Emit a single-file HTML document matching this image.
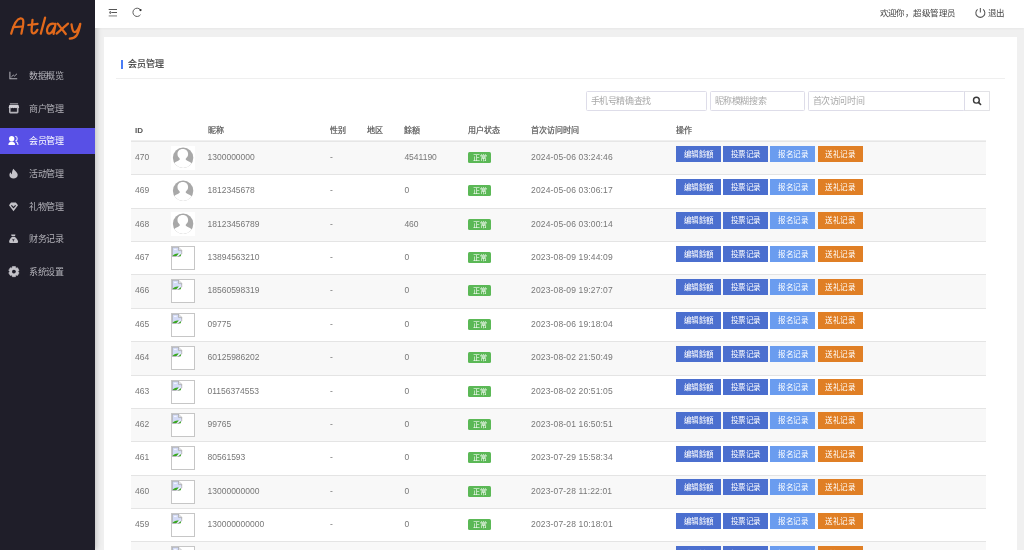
<!DOCTYPE html>
<html lang="zh-CN"><head><meta charset="utf-8">
<style>
*{margin:0;padding:0;box-sizing:border-box}
html,body{width:1024px;height:550px;overflow:hidden;background:#f0f0f0;font-family:"Liberation Sans",sans-serif;color:#555}
.a{position:absolute}
#side{position:absolute;left:0;top:0;width:95px;height:550px;background:#1f1e29;z-index:3;box-shadow:1px 0 6px rgba(0,0,0,.22)}
#logo{position:absolute;left:0;top:0}
.mi{position:absolute;left:0;width:95px;height:26px;color:#b3b2b9}
.mi .t{position:absolute;left:29px;top:0;line-height:26px;font-size:9px;letter-spacing:-.5px;white-space:nowrap}
.mi svg{position:absolute;left:5px;top:3px}
.mi.act{background:#5850e6;color:#fff}
#head{position:absolute;left:95px;top:0;width:929px;height:28px;background:#fff;z-index:4;box-shadow:0 1px 2px rgba(0,0,0,.04)}
#card{position:absolute;left:104px;top:37px;width:913px;height:520px;background:#fff}
.ttl{position:absolute;left:128px;top:58.3px;font-size:9px;color:#333;line-height:12px;white-space:nowrap;-webkit-text-stroke:.15px #333}
.bar{position:absolute;left:121px;top:60px;width:2px;height:8.6px;background:#4a7cf6}
.sep{position:absolute;left:116px;top:78px;width:889px;height:1px;background:#efefef}
.inp{position:absolute;top:91px;height:20px;border:1px solid #dedde9;border-radius:1.5px;background:#fff;font-size:9px;letter-spacing:-.45px;color:#a9a9a9;line-height:18.6px;padding-left:3.8px;white-space:nowrap}
.sbtn{position:absolute;top:91px;left:964px;width:25.5px;height:19.8px;border:1px solid #e2e2e6;border-left-color:#dcdbe8;border-radius:0 1px 1px 0;background:#fff}
.thead{position:absolute;left:131px;top:119px;width:855px;height:23px;border-bottom:1px solid #e6e6e6;box-shadow:inset 0 -1px 0 #efefef}
.th{position:absolute;top:6.2px;line-height:12px;font-size:8px;letter-spacing:0;font-weight:normal;-webkit-text-stroke:.2px #555;color:#555;white-space:nowrap}
.row{position:absolute;left:131px;width:855px;height:33.36px;border-bottom:1px solid #e4e4e4;font-size:8.5px;color:#777}
.row.odd{background:#f8f8f8}
.row.even{background:#fff}
.tx{position:absolute;top:0;line-height:30.3px;white-space:nowrap}
.dt{letter-spacing:.15px}
.av{position:absolute;left:40.3px;top:3.5px;width:24px;height:24px;background:#fff}
.av svg{display:block}
.br{position:absolute;left:40px;top:4px;width:24px;height:24px;border:1px solid #c6c6c6;background:#fff}
.tag{position:absolute;left:336.8px;top:10px;width:23.5px;height:11px;background:#5bb856;border-radius:1.5px;color:#fff;font-size:7px;line-height:11px;text-align:center;letter-spacing:-.2px}
.btn{position:absolute;top:3.6px;height:16.3px;line-height:17.8px;width:45px;text-align:center;color:#fff;font-size:7.5px;letter-spacing:.5px;text-indent:.5px}
.b1{background:#4b6fcf}
.b2{background:#4b6fcf}
.b3{background:#6a9cef}
.b4{background:#e07f25}
</style></head><body><div id="root" style="position:absolute;left:0;top:0;width:1024px;height:550px;will-change:transform">
<div id="side">
  <svg id="logo" width="95" height="50" viewBox="0 0 95 50"><g fill="none" stroke="#e2691b" stroke-width="2.25" stroke-linecap="round" stroke-linejoin="round">
    <path d="M11.2 33.6C13 27 16 18.8 20.5 18.3C23.6 18 23.6 21 23.1 25L21.4 33.6"/>
    <path d="M13.6 27.2L22.8 26.5"/>
    <path d="M32.5 19.8L31.6 29.5C31.4 32.5 32.5 33.4 33.8 33.3C35.5 33.1 36.6 31.5 37.4 29.8"/>
    <path d="M28.3 25L37.6 23.8"/>
    <path d="M45.1 17.6L40.8 33.6"/>
    <path d="M55.2 24C52.5 23.3 49.2 24 47.8 27C46.6 29.6 46.6 33.2 48.8 33.6C51 34 53.3 30.3 54.6 27.3M55.6 23.8L53.6 33.8"/>
    <path d="M57.7 23.6L65.8 34M68 23.6L56.6 33.6"/>
    <path d="M71.5 24.3C72 27 72.3 31.5 74.3 32C76 32.3 78.5 28.8 80.3 23.8C79.5 28.5 78.3 33 76.5 35.5C75 37.5 72.5 38.5 69.8 38.7"/>
  </g></svg>
  <div class="mi" style="top:62.80px"><svg width="20" height="20" viewBox="0 0 20 20"><path d="M4.9 5.8V12.7H12.2" stroke="#b3b2b9" stroke-width="1.05" fill="none"/><path d="M6.3 11L8.3 9.1 9.4 10.1 12 7.8" stroke="#b3b2b9" stroke-width=".9" fill="none"/></svg><span class="t">数据概览</span></div>
<div class="mi" style="top:95.50px"><svg width="20" height="20" viewBox="0 0 20 20"><path d="M4.9 4.3H13.1V5.4H4.9z" fill="#a8a7ae"/><path d="M4.3 6H13.5L14.2 8.8Q13.2 9.6 12.1 8.8Q11 9.6 9.9 8.8Q8.8 9.6 7.7 8.8Q6.6 9.6 5.5 8.8Q4.4 9.5 3.6 8.8z" fill="#d2d1d7"/><path d="M4.8 9.1V13.1Q4.8 13.6 5.3 13.6H12.2Q12.7 13.6 12.7 13.1V9.1" stroke="#b3b2b9" stroke-width="1.6" fill="none"/></svg><span class="t">商户管理</span></div>
<div class="mi act" style="top:128.20px"><svg width="20" height="20" viewBox="0 0 20 20"><circle cx="6.7" cy="7.7" r="2.65" fill="#fff"/><path d="M3.3 14C3.3 11.7 4.8 10.5 6.7 10.5S10.1 11.7 10.1 14z" fill="#fff"/><path d="M10.3 5.3A2.4 2.4 0 0 1 10.3 10M11 10.8C12.3 11.3 13 12.4 13 13.9" stroke="#eeeefc" stroke-width="1.1" fill="none"/></svg><span class="t">会员管理</span></div>
<div class="mi" style="top:160.90px"><svg width="20" height="20" viewBox="0 0 20 20"><path d="M8.5 4.8C9.3 6.3 10.6 7 11.3 7.9C12.2 8.9 12.7 9.9 12.7 11.1C12.7 13.1 10.8 14.6 8.5 14.6C6.2 14.6 4.4 13.1 4.4 11.1C4.4 9.6 5.1 8.7 5.7 8.2C5.8 9.2 6.3 9.9 6.9 10.2C6.8 8.2 7.4 6 8.5 4.8Z" fill="#c4c3c9"/></svg><span class="t">活动管理</span></div>
<div class="mi" style="top:193.60px"><svg width="20" height="20" viewBox="0 0 20 20"><path d="M6.1 5.4H10.9L13 8.3L8.5 14.2L4 8.3Z" fill="#c4c3c9"/><path d="M6.4 8.3L8.5 10.7L10.6 8.3" stroke="#1f1e29" stroke-width="1.1" fill="none"/><path d="M5.5 7.2H11.5" stroke="#c4c3c9" stroke-width=".6"/></svg><span class="t">礼物管理</span></div>
<div class="mi" style="top:226.30px"><svg width="20" height="20" viewBox="0 0 20 20"><path d="M6.4 5.4H10.2Q10.6 5.4 10.4 5.9L10 6.9H6.6L6.2 5.9Q6 5.4 6.4 5.4z" fill="#c4c3c9"/><path d="M7.2 7.7H9.6C10.6 8.6 13.1 10.6 13.1 12.8Q13.1 14.1 11.8 14.1H5.4Q4.1 14.1 4.1 12.8C4.1 10.6 6.2 8.6 7.2 7.7z" fill="#c4c3c9"/><path d="M7.5 9.9L8.4 11.1 9.3 9.9M8.4 11.1V12.4" stroke="#1f1e29" stroke-width=".85" fill="none"/></svg><span class="t">财务记录</span></div>
<div class="mi" style="top:259.00px"><svg width="20" height="20" viewBox="0 0 20 20"><path d="M6.96 6.22 L7.33 4.54 L10.47 4.54 L10.84 6.22 L10.86 6.23 L12.50 5.71 L14.07 8.42 L12.80 9.59 L12.80 9.61 L14.07 10.78 L12.50 13.49 L10.86 12.97 L10.84 12.98 L10.47 14.66 L7.33 14.66 L6.96 12.98 L6.94 12.97 L5.30 13.49 L3.73 10.78 L5.00 9.61 L5.00 9.59 L3.73 8.42 L5.30 5.71 L6.94 6.23Z" fill="#c4c3c9" stroke="#c4c3c9" stroke-width=".6" stroke-linejoin="round"/><circle cx="8.9" cy="9.6" r="1.9" fill="#1f1e29"/></svg><span class="t">系统设置</span></div>
</div>
<div id="head">
  <svg class="a" style="left:0;top:0" width="80" height="28" viewBox="95 0 80 28"><g stroke="#555" fill="none">
    <path d="M108.7 9.5H117M111.3 12.5H117" stroke-width="1.05"/><path d="M108.7 15.9H117" stroke-width="1.3" stroke="#9a9a9a"/>
    <path d="M110.4 11.1Q108.6 12.5 110.4 13.9Z" fill="#555" stroke-width=".6"/>
    <path d="M140.3 9.7A4.15 4.15 0 1 0 140.5 14.7" stroke-width=".95" stroke="#555"/>
  </g><circle cx="140.5" cy="10.1" r="1.15" fill="#333"/></svg>
  <div class="a" style="left:784.5px;top:7px;font-size:8.5px;letter-spacing:-.55px;color:#444;line-height:12px;white-space:nowrap">欢迎你，超级管理员</div>
  <svg class="a" style="left:875px;top:3px" width="20" height="20" viewBox="970 3 20 20"><path d="M977.6 9.3A4.5 4.5 0 1 0 983.1 9.3" stroke="#555" stroke-width="1.05" fill="none"/><path d="M980.35 8.1V12.6" stroke="#555" stroke-width="1.05"/></svg>
  <div class="a" style="left:892.5px;top:7px;font-size:8.5px;letter-spacing:-.5px;color:#444;line-height:12px;white-space:nowrap">退出</div>
</div>
<div id="card"></div>
<div class="bar"></div>
<div class="ttl">会员管理</div>
<div class="sep"></div>
<div class="inp" style="left:586px;width:121px">手机号精确查找</div>
<div class="inp" style="left:710px;width:95px">昵称模糊搜索</div>
<div class="inp" style="left:808px;width:157px">首次访问时间</div>
<div class="sbtn"><svg style="position:absolute;left:-1px;top:-1px" width="26" height="21" viewBox="964 91 26 21"><circle cx="976.4" cy="100.2" r="2.9" stroke="#383838" stroke-width="1.4" fill="none"/><path d="M978.5 102.4L980.6 104.5" stroke="#383838" stroke-width="1.6" stroke-linecap="round"/></svg></div>
<div class="thead">
<span class="th" style="left:4px;top:5.5px;font-size:8px;font-weight:bold;letter-spacing:0;-webkit-text-stroke:0;color:#555">ID</span><span class="th" style="left:76.5px">昵称</span><span class="th" style="left:199px">性别</span><span class="th" style="left:236px">地区</span><span class="th" style="left:273.4px">餘額</span><span class="th" style="left:336.8px">用户状态</span><span class="th" style="left:400.1px">首次访问时间</span><span class="th" style="left:545.2px">操作</span>
</div>
<div class="row odd" style="top:142.00px"><span class="tx" style="left:4px">470</span><div class="av"><svg width="24" height="24" viewBox="0 0 24 24"><defs><clipPath id="c0"><circle cx="12.1" cy="11.8" r="10.2"/></clipPath></defs><circle cx="12.1" cy="11.8" r="10.2" fill="#a8a8a8"/><g clip-path="url(#c0)"><path d="M11.8 3C8.4 3 6.5 5.2 6.5 8C6.5 9.6 7.1 10.9 8.1 11.7L8.9 12.9C8.9 13.8 7 14.9 4.5 16L1 19.5V24H23V19.5L19 16C16.5 14.9 14.6 13.8 14.6 12.9L15.5 11.7C16.5 10.9 17.1 9.6 17.1 8C17.1 5.2 15.2 3 11.8 3Z" fill="#fff"/></g></svg></div><span class="tx" style="left:76.5px">1300000000</span><span class="tx" style="left:199px">-</span><span class="tx" style="left:273.4px">4541190</span><span class="tag">正常</span><span class="tx dt" style="left:400.1px">2024-05-06 03:24:46</span><span class="btn b1" style="left:545.2px">编辑餘額</span><span class="btn b2" style="left:592.2px">投票记录</span><span class="btn b3" style="left:639.3px">报名记录</span><span class="btn b4" style="left:686.6px">送礼记录</span></div>
<div class="row even" style="top:175.36px"><span class="tx" style="left:4px">469</span><div class="av"><svg width="24" height="24" viewBox="0 0 24 24"><defs><clipPath id="c1"><circle cx="12.1" cy="11.8" r="10.2"/></clipPath></defs><circle cx="12.1" cy="11.8" r="10.2" fill="#a8a8a8"/><g clip-path="url(#c1)"><path d="M11.8 3C8.4 3 6.5 5.2 6.5 8C6.5 9.6 7.1 10.9 8.1 11.7L8.9 12.9C8.9 13.8 7 14.9 4.5 16L1 19.5V24H23V19.5L19 16C16.5 14.9 14.6 13.8 14.6 12.9L15.5 11.7C16.5 10.9 17.1 9.6 17.1 8C17.1 5.2 15.2 3 11.8 3Z" fill="#fff"/></g></svg></div><span class="tx" style="left:76.5px">1812345678</span><span class="tx" style="left:199px">-</span><span class="tx" style="left:273.4px">0</span><span class="tag">正常</span><span class="tx dt" style="left:400.1px">2024-05-06 03:06:17</span><span class="btn b1" style="left:545.2px">编辑餘額</span><span class="btn b2" style="left:592.2px">投票记录</span><span class="btn b3" style="left:639.3px">报名记录</span><span class="btn b4" style="left:686.6px">送礼记录</span></div>
<div class="row odd" style="top:208.72px"><span class="tx" style="left:4px">468</span><div class="av"><svg width="24" height="24" viewBox="0 0 24 24"><defs><clipPath id="c2"><circle cx="12.1" cy="11.8" r="10.2"/></clipPath></defs><circle cx="12.1" cy="11.8" r="10.2" fill="#a8a8a8"/><g clip-path="url(#c2)"><path d="M11.8 3C8.4 3 6.5 5.2 6.5 8C6.5 9.6 7.1 10.9 8.1 11.7L8.9 12.9C8.9 13.8 7 14.9 4.5 16L1 19.5V24H23V19.5L19 16C16.5 14.9 14.6 13.8 14.6 12.9L15.5 11.7C16.5 10.9 17.1 9.6 17.1 8C17.1 5.2 15.2 3 11.8 3Z" fill="#fff"/></g></svg></div><span class="tx" style="left:76.5px">18123456789</span><span class="tx" style="left:199px">-</span><span class="tx" style="left:273.4px">460</span><span class="tag">正常</span><span class="tx dt" style="left:400.1px">2024-05-06 03:00:14</span><span class="btn b1" style="left:545.2px">编辑餘額</span><span class="btn b2" style="left:592.2px">投票记录</span><span class="btn b3" style="left:639.3px">报名记录</span><span class="btn b4" style="left:686.6px">送礼记录</span></div>
<div class="row even" style="top:242.08px"><span class="tx" style="left:4px">467</span><div class="br"><svg width="11" height="11" viewBox="0 0 11 11" style="position:absolute;left:0;top:0"><path d="M.3 .2H6.5L9.7 3.4V6.6L7.3 9.4H.3Z" fill="#d3dbf7" stroke="#9a9a9a" stroke-width=".7"/><ellipse cx="3.3" cy="2.4" rx="1.5" ry=".7" fill="#f4f6ff"/><path d="M6.5 .2V3.4H9.7" fill="#e6e6e6" stroke="#9a9a9a" stroke-width=".6"/><path d="M.6 9.1C1.5 7.3 4 6.2 6.8 6.6L4.6 9.1Z" fill="#3aa820"/><path d="M6.4 9.2L8.9 7.2V9.2Z" fill="#3aa820"/><path d="M4.6 9.9L8.9 5.6" stroke="#fff" stroke-width=".8"/></svg></div><span class="tx" style="left:76.5px">13894563210</span><span class="tx" style="left:199px">-</span><span class="tx" style="left:273.4px">0</span><span class="tag">正常</span><span class="tx dt" style="left:400.1px">2023-08-09 19:44:09</span><span class="btn b1" style="left:545.2px">编辑餘額</span><span class="btn b2" style="left:592.2px">投票记录</span><span class="btn b3" style="left:639.3px">报名记录</span><span class="btn b4" style="left:686.6px">送礼记录</span></div>
<div class="row odd" style="top:275.44px"><span class="tx" style="left:4px">466</span><div class="br"><svg width="11" height="11" viewBox="0 0 11 11" style="position:absolute;left:0;top:0"><path d="M.3 .2H6.5L9.7 3.4V6.6L7.3 9.4H.3Z" fill="#d3dbf7" stroke="#9a9a9a" stroke-width=".7"/><ellipse cx="3.3" cy="2.4" rx="1.5" ry=".7" fill="#f4f6ff"/><path d="M6.5 .2V3.4H9.7" fill="#e6e6e6" stroke="#9a9a9a" stroke-width=".6"/><path d="M.6 9.1C1.5 7.3 4 6.2 6.8 6.6L4.6 9.1Z" fill="#3aa820"/><path d="M6.4 9.2L8.9 7.2V9.2Z" fill="#3aa820"/><path d="M4.6 9.9L8.9 5.6" stroke="#fff" stroke-width=".8"/></svg></div><span class="tx" style="left:76.5px">18560598319</span><span class="tx" style="left:199px">-</span><span class="tx" style="left:273.4px">0</span><span class="tag">正常</span><span class="tx dt" style="left:400.1px">2023-08-09 19:27:07</span><span class="btn b1" style="left:545.2px">编辑餘額</span><span class="btn b2" style="left:592.2px">投票记录</span><span class="btn b3" style="left:639.3px">报名记录</span><span class="btn b4" style="left:686.6px">送礼记录</span></div>
<div class="row even" style="top:308.80px"><span class="tx" style="left:4px">465</span><div class="br"><svg width="11" height="11" viewBox="0 0 11 11" style="position:absolute;left:0;top:0"><path d="M.3 .2H6.5L9.7 3.4V6.6L7.3 9.4H.3Z" fill="#d3dbf7" stroke="#9a9a9a" stroke-width=".7"/><ellipse cx="3.3" cy="2.4" rx="1.5" ry=".7" fill="#f4f6ff"/><path d="M6.5 .2V3.4H9.7" fill="#e6e6e6" stroke="#9a9a9a" stroke-width=".6"/><path d="M.6 9.1C1.5 7.3 4 6.2 6.8 6.6L4.6 9.1Z" fill="#3aa820"/><path d="M6.4 9.2L8.9 7.2V9.2Z" fill="#3aa820"/><path d="M4.6 9.9L8.9 5.6" stroke="#fff" stroke-width=".8"/></svg></div><span class="tx" style="left:76.5px">09775</span><span class="tx" style="left:199px">-</span><span class="tx" style="left:273.4px">0</span><span class="tag">正常</span><span class="tx dt" style="left:400.1px">2023-08-06 19:18:04</span><span class="btn b1" style="left:545.2px">编辑餘額</span><span class="btn b2" style="left:592.2px">投票记录</span><span class="btn b3" style="left:639.3px">报名记录</span><span class="btn b4" style="left:686.6px">送礼记录</span></div>
<div class="row odd" style="top:342.16px"><span class="tx" style="left:4px">464</span><div class="br"><svg width="11" height="11" viewBox="0 0 11 11" style="position:absolute;left:0;top:0"><path d="M.3 .2H6.5L9.7 3.4V6.6L7.3 9.4H.3Z" fill="#d3dbf7" stroke="#9a9a9a" stroke-width=".7"/><ellipse cx="3.3" cy="2.4" rx="1.5" ry=".7" fill="#f4f6ff"/><path d="M6.5 .2V3.4H9.7" fill="#e6e6e6" stroke="#9a9a9a" stroke-width=".6"/><path d="M.6 9.1C1.5 7.3 4 6.2 6.8 6.6L4.6 9.1Z" fill="#3aa820"/><path d="M6.4 9.2L8.9 7.2V9.2Z" fill="#3aa820"/><path d="M4.6 9.9L8.9 5.6" stroke="#fff" stroke-width=".8"/></svg></div><span class="tx" style="left:76.5px">60125986202</span><span class="tx" style="left:199px">-</span><span class="tx" style="left:273.4px">0</span><span class="tag">正常</span><span class="tx dt" style="left:400.1px">2023-08-02 21:50:49</span><span class="btn b1" style="left:545.2px">编辑餘額</span><span class="btn b2" style="left:592.2px">投票记录</span><span class="btn b3" style="left:639.3px">报名记录</span><span class="btn b4" style="left:686.6px">送礼记录</span></div>
<div class="row even" style="top:375.52px"><span class="tx" style="left:4px">463</span><div class="br"><svg width="11" height="11" viewBox="0 0 11 11" style="position:absolute;left:0;top:0"><path d="M.3 .2H6.5L9.7 3.4V6.6L7.3 9.4H.3Z" fill="#d3dbf7" stroke="#9a9a9a" stroke-width=".7"/><ellipse cx="3.3" cy="2.4" rx="1.5" ry=".7" fill="#f4f6ff"/><path d="M6.5 .2V3.4H9.7" fill="#e6e6e6" stroke="#9a9a9a" stroke-width=".6"/><path d="M.6 9.1C1.5 7.3 4 6.2 6.8 6.6L4.6 9.1Z" fill="#3aa820"/><path d="M6.4 9.2L8.9 7.2V9.2Z" fill="#3aa820"/><path d="M4.6 9.9L8.9 5.6" stroke="#fff" stroke-width=".8"/></svg></div><span class="tx" style="left:76.5px">01156374553</span><span class="tx" style="left:199px">-</span><span class="tx" style="left:273.4px">0</span><span class="tag">正常</span><span class="tx dt" style="left:400.1px">2023-08-02 20:51:05</span><span class="btn b1" style="left:545.2px">编辑餘額</span><span class="btn b2" style="left:592.2px">投票记录</span><span class="btn b3" style="left:639.3px">报名记录</span><span class="btn b4" style="left:686.6px">送礼记录</span></div>
<div class="row odd" style="top:408.88px"><span class="tx" style="left:4px">462</span><div class="br"><svg width="11" height="11" viewBox="0 0 11 11" style="position:absolute;left:0;top:0"><path d="M.3 .2H6.5L9.7 3.4V6.6L7.3 9.4H.3Z" fill="#d3dbf7" stroke="#9a9a9a" stroke-width=".7"/><ellipse cx="3.3" cy="2.4" rx="1.5" ry=".7" fill="#f4f6ff"/><path d="M6.5 .2V3.4H9.7" fill="#e6e6e6" stroke="#9a9a9a" stroke-width=".6"/><path d="M.6 9.1C1.5 7.3 4 6.2 6.8 6.6L4.6 9.1Z" fill="#3aa820"/><path d="M6.4 9.2L8.9 7.2V9.2Z" fill="#3aa820"/><path d="M4.6 9.9L8.9 5.6" stroke="#fff" stroke-width=".8"/></svg></div><span class="tx" style="left:76.5px">99765</span><span class="tx" style="left:199px">-</span><span class="tx" style="left:273.4px">0</span><span class="tag">正常</span><span class="tx dt" style="left:400.1px">2023-08-01 16:50:51</span><span class="btn b1" style="left:545.2px">编辑餘額</span><span class="btn b2" style="left:592.2px">投票记录</span><span class="btn b3" style="left:639.3px">报名记录</span><span class="btn b4" style="left:686.6px">送礼记录</span></div>
<div class="row even" style="top:442.24px"><span class="tx" style="left:4px">461</span><div class="br"><svg width="11" height="11" viewBox="0 0 11 11" style="position:absolute;left:0;top:0"><path d="M.3 .2H6.5L9.7 3.4V6.6L7.3 9.4H.3Z" fill="#d3dbf7" stroke="#9a9a9a" stroke-width=".7"/><ellipse cx="3.3" cy="2.4" rx="1.5" ry=".7" fill="#f4f6ff"/><path d="M6.5 .2V3.4H9.7" fill="#e6e6e6" stroke="#9a9a9a" stroke-width=".6"/><path d="M.6 9.1C1.5 7.3 4 6.2 6.8 6.6L4.6 9.1Z" fill="#3aa820"/><path d="M6.4 9.2L8.9 7.2V9.2Z" fill="#3aa820"/><path d="M4.6 9.9L8.9 5.6" stroke="#fff" stroke-width=".8"/></svg></div><span class="tx" style="left:76.5px">80561593</span><span class="tx" style="left:199px">-</span><span class="tx" style="left:273.4px">0</span><span class="tag">正常</span><span class="tx dt" style="left:400.1px">2023-07-29 15:58:34</span><span class="btn b1" style="left:545.2px">编辑餘額</span><span class="btn b2" style="left:592.2px">投票记录</span><span class="btn b3" style="left:639.3px">报名记录</span><span class="btn b4" style="left:686.6px">送礼记录</span></div>
<div class="row odd" style="top:475.60px"><span class="tx" style="left:4px">460</span><div class="br"><svg width="11" height="11" viewBox="0 0 11 11" style="position:absolute;left:0;top:0"><path d="M.3 .2H6.5L9.7 3.4V6.6L7.3 9.4H.3Z" fill="#d3dbf7" stroke="#9a9a9a" stroke-width=".7"/><ellipse cx="3.3" cy="2.4" rx="1.5" ry=".7" fill="#f4f6ff"/><path d="M6.5 .2V3.4H9.7" fill="#e6e6e6" stroke="#9a9a9a" stroke-width=".6"/><path d="M.6 9.1C1.5 7.3 4 6.2 6.8 6.6L4.6 9.1Z" fill="#3aa820"/><path d="M6.4 9.2L8.9 7.2V9.2Z" fill="#3aa820"/><path d="M4.6 9.9L8.9 5.6" stroke="#fff" stroke-width=".8"/></svg></div><span class="tx" style="left:76.5px">13000000000</span><span class="tx" style="left:199px">-</span><span class="tx" style="left:273.4px">0</span><span class="tag">正常</span><span class="tx dt" style="left:400.1px">2023-07-28 11:22:01</span><span class="btn b1" style="left:545.2px">编辑餘額</span><span class="btn b2" style="left:592.2px">投票记录</span><span class="btn b3" style="left:639.3px">报名记录</span><span class="btn b4" style="left:686.6px">送礼记录</span></div>
<div class="row even" style="top:508.96px"><span class="tx" style="left:4px">459</span><div class="br"><svg width="11" height="11" viewBox="0 0 11 11" style="position:absolute;left:0;top:0"><path d="M.3 .2H6.5L9.7 3.4V6.6L7.3 9.4H.3Z" fill="#d3dbf7" stroke="#9a9a9a" stroke-width=".7"/><ellipse cx="3.3" cy="2.4" rx="1.5" ry=".7" fill="#f4f6ff"/><path d="M6.5 .2V3.4H9.7" fill="#e6e6e6" stroke="#9a9a9a" stroke-width=".6"/><path d="M.6 9.1C1.5 7.3 4 6.2 6.8 6.6L4.6 9.1Z" fill="#3aa820"/><path d="M6.4 9.2L8.9 7.2V9.2Z" fill="#3aa820"/><path d="M4.6 9.9L8.9 5.6" stroke="#fff" stroke-width=".8"/></svg></div><span class="tx" style="left:76.5px">130000000000</span><span class="tx" style="left:199px">-</span><span class="tx" style="left:273.4px">0</span><span class="tag">正常</span><span class="tx dt" style="left:400.1px">2023-07-28 10:18:01</span><span class="btn b1" style="left:545.2px">编辑餘額</span><span class="btn b2" style="left:592.2px">投票记录</span><span class="btn b3" style="left:639.3px">报名记录</span><span class="btn b4" style="left:686.6px">送礼记录</span></div>
<div class="row odd" style="top:542.32px"><span class="tx" style="left:4px">458</span><div class="br"><svg width="11" height="11" viewBox="0 0 11 11" style="position:absolute;left:0;top:0"><path d="M.3 .2H6.5L9.7 3.4V6.6L7.3 9.4H.3Z" fill="#d3dbf7" stroke="#9a9a9a" stroke-width=".7"/><ellipse cx="3.3" cy="2.4" rx="1.5" ry=".7" fill="#f4f6ff"/><path d="M6.5 .2V3.4H9.7" fill="#e6e6e6" stroke="#9a9a9a" stroke-width=".6"/><path d="M.6 9.1C1.5 7.3 4 6.2 6.8 6.6L4.6 9.1Z" fill="#3aa820"/><path d="M6.4 9.2L8.9 7.2V9.2Z" fill="#3aa820"/><path d="M4.6 9.9L8.9 5.6" stroke="#fff" stroke-width=".8"/></svg></div><span class="tx" style="left:76.5px">13000000001</span><span class="tx" style="left:199px">-</span><span class="tx" style="left:273.4px">0</span><span class="tag">正常</span><span class="tx dt" style="left:400.1px">2023-07-28 10:10:01</span><span class="btn b1" style="left:545.2px">编辑餘額</span><span class="btn b2" style="left:592.2px">投票记录</span><span class="btn b3" style="left:639.3px">报名记录</span><span class="btn b4" style="left:686.6px">送礼记录</span></div>
</div></body></html>
